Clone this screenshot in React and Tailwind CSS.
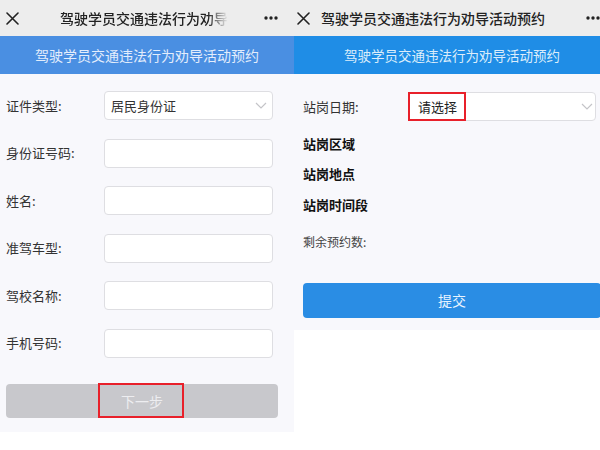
import React from "react";

function XIcon() {
  return (
    <svg width="13" height="13" viewBox="0 0 13 13">
      <path d="M1 1 L12 12 M12 1 L1 12" stroke="#222" strokeWidth="1.6" strokeLinecap="round" />
    </svg>
  );
}

function Dots() {
  return (
    <svg width="14" height="4" viewBox="0 0 14 4">
      <circle cx="2" cy="2" r="1.7" fill="#222" />
      <circle cx="7" cy="2" r="1.7" fill="#222" />
      <circle cx="12" cy="2" r="1.7" fill="#222" />
    </svg>
  );
}

function Chevron() {
  return (
    <svg width="12" height="7" viewBox="0 0 12 7">
      <path d="M1 1 L6 6 L11 1" fill="none" stroke="#c4c4c8" strokeWidth="1.2" />
    </svg>
  );
}

function Row({ label, children }) {
  return (
    <div className="flex items-center h-[29px] pl-[6px]">
      <div className="w-[98px] text-[13px] text-[#333]">{label}</div>
      <div className="w-[169px] h-full rounded-[4px] border border-[#dedee2] bg-white flex items-center">
        {children}
      </div>
    </div>
  );
}

export default function App() {
  return (
    <div className="w-[600px] h-[450px] bg-white overflow-hidden flex items-start font-['Noto_Sans_CJK_SC','Noto_Sans',sans-serif]">
      {/* Left screen */}
      <div className="w-[294px] shrink-0 flex flex-col">
        <div className="h-[36px] bg-[#ededed] flex items-center pl-[6px] pr-[16px]">
          <XIcon />
          <div className="ml-[41px] text-[14px] font-medium text-[#222] whitespace-nowrap [mask-image:linear-gradient(to_right,black_88%,transparent)]">
            驾驶学员交通违法行为劝导
          </div>
          <div className="flex-1" />
          <Dots />
        </div>
        <div className="h-[38px] bg-[#4a8fe2] flex items-center justify-center text-[14px] text-[#e3edfc]">
          驾驶学员交通违法行为劝导活动预约
        </div>
        <div className="bg-[#f8f8fc] pt-[17px] pb-[14px]">
          <div className="flex flex-col gap-[18.5px]">
            <Row label="证件类型:">
              <div className="flex-1 pl-[6px] text-[13px] text-[#333]">居民身份证</div>
              <div className="pr-[5px] flex items-center">
                <Chevron />
              </div>
            </Row>
            <Row label="身份证号码:" />
            <Row label="姓名:" />
            <Row label="准驾车型:" />
            <Row label="驾校名称:" />
            <Row label="手机号码:" />
          </div>
          <div className="relative mt-[26.5px] ml-[6px] mr-[16px] h-[34px] rounded-[4px] bg-[#c8c8cc] flex items-center justify-center text-[14px] text-[#ededf0]">
            下一步
            <span className="absolute left-[92px] -top-px w-[86px] h-[35px] border-2 border-[#e8202a]" />
          </div>
        </div>
      </div>

      {/* Right screen */}
      <div className="w-[316px] shrink-0 flex flex-col">
        <div className="h-[36px] bg-[#ededed] flex items-center pl-[3px] pr-[10px]">
          <XIcon />
          <div className="ml-[11px] text-[14px] font-medium text-[#222] whitespace-nowrap">
            驾驶学员交通违法行为劝导活动预约
          </div>
          <div className="flex-1" />
          <Dots />
        </div>
        <div className="h-[38px] bg-[#1f8de6] flex items-center justify-center text-[13.5px] text-[#dcedfb]">
          驾驶学员交通违法行为劝导活动预约
        </div>
        <div className="bg-[#f8f8fc] pt-[18px] pb-[12px] px-[9px]">
          <div className="flex items-center h-[29px]">
            <div className="w-[105px] text-[13px] text-[#333]">站岗日期:</div>
            <div className="relative w-[188px] h-full rounded-[4px] border border-[#dedee2] bg-white flex items-center">
              <div className="flex-1 pl-[9px] text-[13px] text-[#222]">请选择</div>
              <div className="pr-[2px] flex items-center">
                <Chevron />
              </div>
              <span className="absolute -left-px -top-px w-[58px] h-[29px] border-2 border-[#e8202a]" />
            </div>
          </div>
          <div className="mt-[13px] leading-[20px] text-[13px] font-bold text-[#111]">站岗区域</div>
          <div className="mt-[10px] leading-[20px] text-[13px] font-bold text-[#111]">站岗地点</div>
          <div className="mt-[11px] leading-[20px] text-[13px] font-bold text-[#111]">站岗时间段</div>
          <div className="mt-[17px] leading-[20px] text-[12px] text-[#444]">剩余预约数:</div>
          <div className="mt-[31px] h-[35px] rounded-[4px] bg-[#2a8de4] flex items-center justify-center text-[14px] text-[#e8f4ff]">
            提交
          </div>
        </div>
      </div>
    </div>
  );
}
